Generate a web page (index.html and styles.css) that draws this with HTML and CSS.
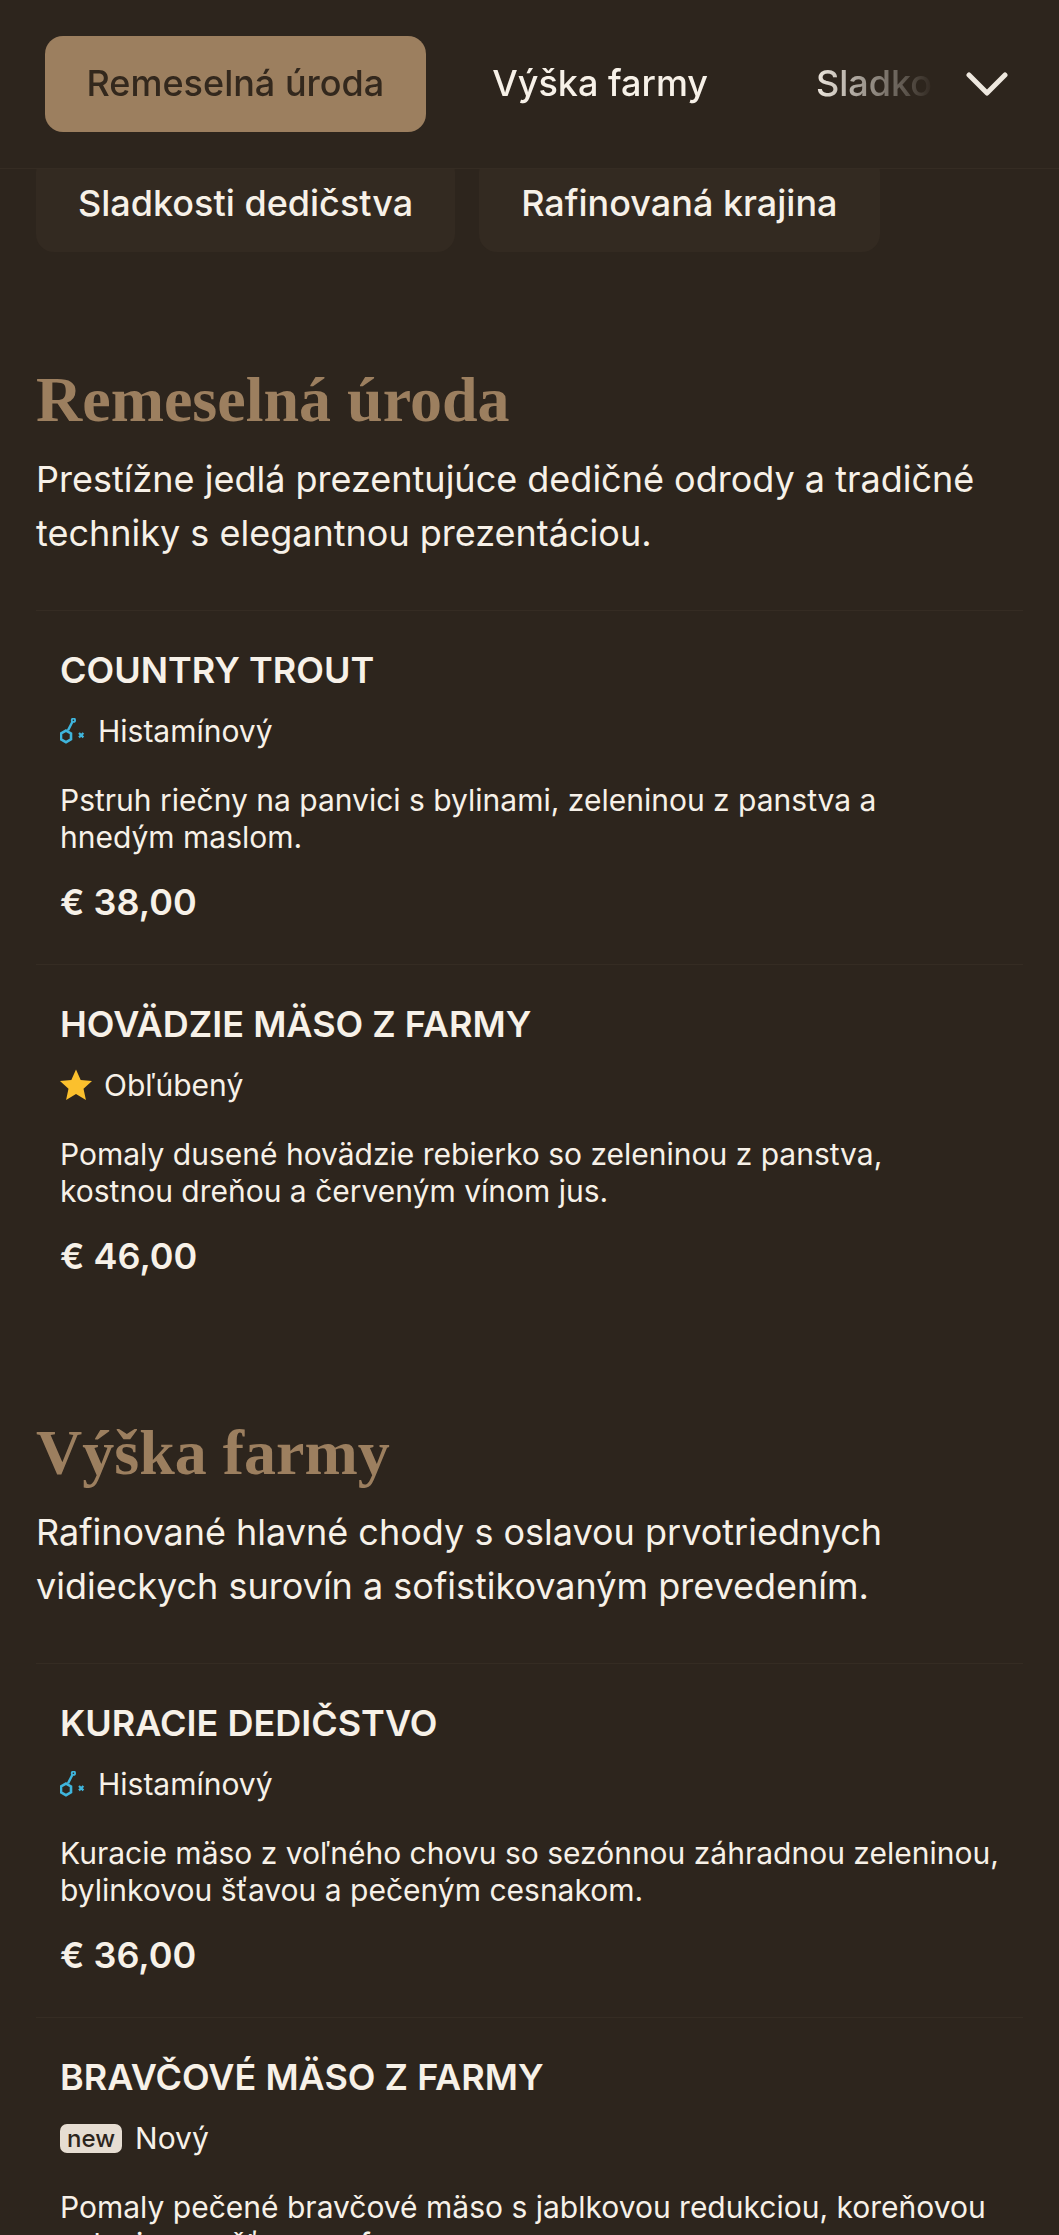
FILE: index.html
```html
<!DOCTYPE html>
<html lang="sk">
<head>
<meta charset="utf-8">
<title>Menu</title>
<link rel="stylesheet" href="styles.css">
</head>
<body>
<svg class="defs" aria-hidden="true"><defs>
<symbol id="histamine" viewBox="0 0 26 26">
<path d="M6 12.6l5 2.9v5.8l-5 2.9-5-2.9v-5.8z" fill="none" stroke="#3fb5dc" stroke-width="2.6"/>
<path d="M8 12.4l3-5.9 1.4-2.6" fill="none" stroke="#3fb5dc" stroke-width="2.4"/>
<circle cx="13.4" cy="2.2" r="1.7" fill="none" stroke="#3fb5dc" stroke-width="1.8"/>
<path d="M19 15l4.4 4.4m0-4.4L19 19.4" fill="none" stroke="#3fb5dc" stroke-width="2.2"/>
</symbol>
</defs></svg>
<header class="topbar">
  <nav class="tabs">
    <a class="tab tab-active">Remeselná úroda</a>
    <a class="tab">Výška farmy</a>
    <a class="tab">Sladkosti dedičstva</a>
    <a class="tab">Rafinovaná krajina</a>
  </nav>
  <svg class="chevron" viewBox="0 0 42 24" aria-hidden="true"><path d="M3 3l18 18L39 3" fill="none" stroke="#eee8df" stroke-width="5" stroke-linecap="round" stroke-linejoin="round"/></svg>
</header>
<div class="chips">
  <a class="chip">Sladkosti dedičstva</a>
  <a class="chip">Rafinovaná krajina</a>
</div>
<main>
  <section class="section">
    <h2 class="section-title">Remeselná úroda</h2>
    <p class="section-desc">Prestížne jedlá prezentujúce dedičné odrody a tradičné techniky s elegantnou prezentáciou.</p>
    <article class="item">
      <h3 class="item-title">COUNTRY TROUT</h3>
      <div class="tag"><svg class="ico-hist"><use href="#histamine"/></svg>Histamínový</div>
      <p class="item-desc">Pstruh riečny na panvici s bylinami, zeleninou z panstva a hnedým maslom.</p>
      <div class="price">€ 38,00</div>
    </article>
    <article class="item">
      <h3 class="item-title">HOVÄDZIE MÄSO Z FARMY</h3>
      <div class="tag"><svg class="ico-star" viewBox="0 0 24 24"><path d="M12 1l3.3 7.4 8 .8-6 5.4 1.7 7.9L12 18.4l-7 4.1 1.7-7.9-6-5.4 8-.8z" fill="#fbc02d"/></svg>Obľúbený</div>
      <p class="item-desc">Pomaly dusené hovädzie rebierko so zeleninou z panstva, kostnou dreňou a červeným vínom jus.</p>
      <div class="price">€ 46,00</div>
    </article>
  </section>
  <section class="section">
    <h2 class="section-title">Výška farmy</h2>
    <p class="section-desc">Rafinované hlavné chody s oslavou prvotriednych vidieckych surovín a sofistikovaným prevedením.</p>
    <article class="item">
      <h3 class="item-title">KURACIE DEDIČSTVO</h3>
      <div class="tag"><svg class="ico-hist"><use href="#histamine"/></svg>Histamínový</div>
      <p class="item-desc">Kuracie mäso z voľného chovu so sezónnou záhradnou zeleninou, bylinkovou šťavou a pečeným cesnakom.</p>
      <div class="price">€ 36,00</div>
    </article>
    <article class="item">
      <h3 class="item-title">BRAVČOVÉ MÄSO Z FARMY</h3>
      <div class="tag"><span class="badge-new">new</span>Nový</div>
      <p class="item-desc">Pomaly pečené bravčové mäso s jablkovou redukciou, koreňovou zeleninou a šťavou z farmy.</p>
      <div class="price">€ 40,00</div>
    </article>
  </section>
</main>
</body>
</html>
```
FILE: styles.css
```css
* { box-sizing: border-box; }
html, body { margin: 0; height: 2235px; overflow: hidden; }
body { background: #2d251d; color: #f7f1e8; font-family: Inter, "Liberation Sans", sans-serif; }
.defs { width: 0; height: 0; display: block; }
.topbar { position: relative; z-index: 2; height: 169px; padding: 36px 0 0 45px; background: #2d251d; border-bottom: 1px solid #352c23; display: flex; }
.tabs { display: flex; gap: 25px; width: 890px; height: 96px; overflow: hidden; flex: none; -webkit-mask-image: linear-gradient(to right, #000 86%, transparent 100%); mask-image: linear-gradient(to right, #000 86%, transparent 100%); }
.tab { flex: none; height: 96px; padding: 0 41.5px; font-size: 36px; font-weight: 500; line-height: 95px; border-radius: 18px; }
.tab-active { background: #9c7f5f; color: #33281d; }
.chevron { width: 42px; height: 24px; margin: 36px 0 0 31px; flex: none; }
.chips { display: flex; gap: 24px; padding: 0 0 13px 36px; margin-top: -15px; }
.chip { height: 98px; padding: 0 42px; font-size: 36px; font-weight: 500; line-height: 98px; background: #332a21; border-radius: 18px; }
.section { padding: 0 36px; margin-top: 95px; }
.section-title { margin: 0; font-family: "Liberation Serif", serif; font-size: 64px; font-weight: 700; line-height: 80px; color: #9c7f5f; }
.section-desc { margin: 12px 0 0; font-size: 36px; line-height: 54px; padding-bottom: 50px; }
.item { padding: 36px 24px 24px; border-top: 1px solid #352c23; height: 354px; }
.item-title { margin: 0; font-size: 36px; font-weight: 600; line-height: 46px; }
.tag { display: flex; align-items: center; margin-top: 16px; height: 44px; font-size: 30px; }
.ico-hist { width: 26px; height: 26px; margin-right: 12px; }
.ico-star { width: 34px; height: 34px; margin: 0 11px 0 -1px; }
.badge-new { font-size: 24px; font-weight: 500; line-height: 29px; height: 29px; padding: 0 7px; background: #e6ddd2; color: #2d251d; border-radius: 7px; margin-right: 13px; }
.item-desc { margin: 29px 0 0; font-size: 30px; line-height: 37px; }
.price { margin-top: 21px; font-size: 36px; font-weight: 600; line-height: 50px; }
```
